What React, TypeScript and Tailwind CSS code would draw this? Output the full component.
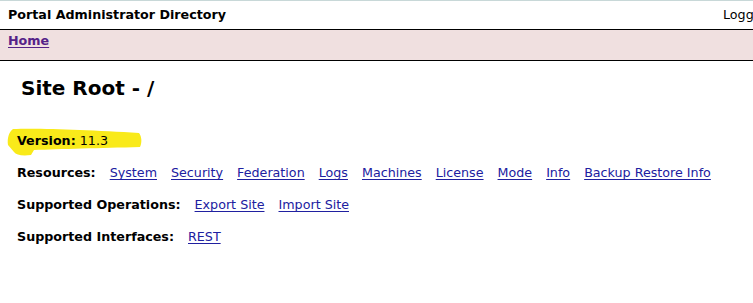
const links = ['System', 'Security', 'Federation', 'Logs', 'Machines', 'License', 'Mode', 'Info', 'Backup Restore Info']

function Link({ children }: { children: React.ReactNode }) {
  return <a href="#" className="text-[#2020a0] underline underline-offset-2">{children}</a>
}

function App() {
  return (
    <div
      className="w-[753px] h-[303px] overflow-hidden bg-white text-[12.7px] text-black"
      style={{ fontFamily: '"DejaVu Sans", Verdana, sans-serif' }}
    >
      {/* header */}
      <div className="border-t border-[#c8d8d8] h-[29px] flex items-center justify-between pl-2 overflow-hidden whitespace-nowrap">
        <span className="font-bold">Portal Administrator Directory</span>
        <span className="ml-auto translate-x-[calc(100%-30px)]">Logged in as: admin</span>
      </div>
      <div className="border-y border-black bg-[#f0e0e0] h-[32px] pl-2 pt-[1px]">
        <a href="#" className="font-bold text-[#552288] underline underline-offset-2">Home</a>
      </div>

      <div className="pl-[21px] pt-[12px] text-[20px] font-bold">Site Root - /</div>

      {/* version, with the yellow marker stroke behind it */}
      <div className="relative mt-[26px] pl-[17px] h-[24px] flex items-center">
        <svg className="absolute left-0 top-[-4px]" width="150" height="34" viewBox="0 0 150 34">
          <path
            d="M13 4 C40 3 90 5 139 8 C142 12 142 18 140 22 C100 23 60 24 34 25 L31 30 C22 31 16 30 14 27 L8 20 C7 13 9 7 13 4 Z"
            fill="#f9ea1a"
          />
        </svg>
        <span className="relative"><b>Version:</b> 11.3</span>
      </div>

      <div className="pl-[17px] mt-[10px] flex flex-col gap-[12px]">
        <div className="flex gap-[14px] h-[20px] items-center">
          <b>Resources:</b>
          {links.map(l => <Link key={l}>{l}</Link>)}
        </div>
        <div className="flex gap-[14px] h-[20px] items-center">
          <b>Supported Operations:</b>
          <Link>Export Site</Link>
          <Link>Import Site</Link>
        </div>
        <div className="flex gap-[14px] h-[20px] items-center">
          <b>Supported Interfaces:</b>
          <Link>REST</Link>
        </div>
      </div>
    </div>
  )
}

export default App
